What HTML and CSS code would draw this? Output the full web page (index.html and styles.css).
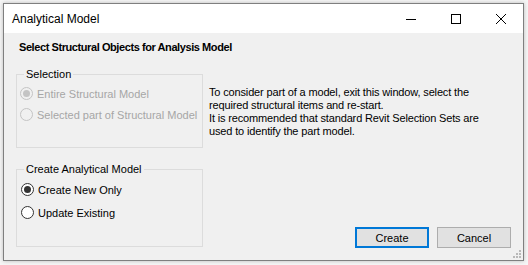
FILE: index.html
```html
<!DOCTYPE html>
<html>
<head>
<meta charset="utf-8">
<title>Analytical Model</title>
<link rel="stylesheet" href="styles.css">
</head>
<body>
<div class="window">
  <div class="titlebar">
    <span class="title">Analytical Model</span>
    <div class="controls">
      <span class="ctl"><svg width="10" height="10" viewBox="0 0 10 10"><path d="M0 5.5H10" stroke="#000" stroke-width="1"/></svg></span>
      <span class="ctl"><svg width="10" height="10" viewBox="0 0 10 10"><rect x="0.5" y="0.5" width="9" height="9" fill="none" stroke="#000" stroke-width="1"/></svg></span>
      <span class="ctl"><svg width="10" height="10" viewBox="0 0 10 10"><path d="M0 0L10 10M10 0L0 10" stroke="#000" stroke-width="1"/></svg></span>
    </div>
  </div>
  <div class="client">
    <div class="heading">Select Structural Objects for Analysis Model</div>
    <div class="main">
      <div class="left">
        <fieldset class="group g1">
          <legend>Selection</legend>
          <div class="radios">
            <label class="radio disabled"><span class="dot checked"></span>Entire Structural Model</label>
            <label class="radio disabled"><span class="dot"></span>Selected part of Structural Model</label>
          </div>
        </fieldset>
        <fieldset class="group g2">
          <legend>Create Analytical Model</legend>
          <div class="radios wide">
            <label class="radio"><span class="dot checked"></span>Create New Only</label>
            <label class="radio"><span class="dot"></span>Update Existing</label>
          </div>
        </fieldset>
      </div>
      <div class="right">
        <p class="info">To consider part of a model, exit this window, select the<br>required structural items and re-start.<br>It is recommended that standard Revit Selection Sets are<br>used to identify the part model.</p>
        <div class="buttons">
          <button class="btn default">Create</button>
          <button class="btn">Cancel</button>
        </div>
      </div>
    </div>
    <svg class="grip" width="9" height="9" viewBox="0 0 9 9">
      <rect x="6" y="0" width="2" height="2" fill="#b8b8b8"/>
      <rect x="3" y="3" width="2" height="2" fill="#b8b8b8"/>
      <rect x="6" y="3" width="2" height="2" fill="#b8b8b8"/>
      <rect x="0" y="6" width="2" height="2" fill="#b8b8b8"/>
      <rect x="3" y="6" width="2" height="2" fill="#b8b8b8"/>
      <rect x="6" y="6" width="2" height="2" fill="#b8b8b8"/>
    </svg>
  </div>
</div>
</body>
</html>
```
FILE: styles.css
```css
html, body {
  margin: 0;
  padding: 0;
}
body {
  background: #f6f6f6;
  font-family: "Liberation Sans", Arial, sans-serif;
  font-size: 11px;
  color: #000;
  padding: 3px 0 0 3px;
  width: 528px;
  height: 265px;
  box-sizing: border-box;
  overflow: hidden;
}
.window {
  width: 521px;
  height: 258px;
  box-sizing: border-box;
  border: 1px solid #7f7f7f;
  box-shadow: 0 0 4px rgba(0,0,0,0.25);
  display: flex;
  flex-direction: column;
  background: #f0f0f0;
}
.titlebar {
  height: 29px;
  flex: none;
  background: #fff;
  display: flex;
  align-items: center;
}
.title {
  font-size: 12px;
  padding-left: 8px;
  flex: 1;
}
.controls {
  display: flex;
  height: 100%;
}
.ctl {
  width: 45px;
  display: flex;
  align-items: center;
  justify-content: center;
}
.ctl svg { display: block; }
.client {
  flex: 1;
  position: relative;
  padding: 8px 12px 0 12px;
  display: flex;
  flex-direction: column;
}
.heading {
  font-weight: bold;
  font-size: 11px;
  line-height: 13px;
  padding-left: 3px;
  letter-spacing: -0.42px;
}
.main {
  display: flex;
  margin-top: 14px;
  flex: 1;
}
.left {
  display: flex;
  flex-direction: column;
  gap: 15px;
  width: 187px;
}
.group {
  margin: 0;
  padding: 0 3px;
  border: 1px solid #dcdcdc;
  box-sizing: border-box;
  min-width: 0;
}
.g1 { height: 80px; }
.g2 { height: 84px; }
.group legend {
  padding: 0 2px;
  margin-left: 4px;
  line-height: 13px;
  font-size: 11px;
}
.radios {
  display: flex;
  flex-direction: column;
  gap: 4px;
  padding-top: 4px;
}
.radios.wide {
  gap: 6px;
  padding-top: 5px;
  padding-left: 1px;
}
.radio {
  display: flex;
  align-items: center;
  height: 17px;
  gap: 4px;
  white-space: nowrap;
}
.dot {
  flex: none;
  width: 13px;
  height: 13px;
  box-sizing: border-box;
  border: 1px solid #333;
  border-radius: 50%;
  background: #fff;
  display: flex;
  align-items: center;
  justify-content: center;
}
.dot.checked::after {
  content: "";
  width: 7px;
  height: 7px;
  border-radius: 50%;
  background: #333;
}
.radio.disabled { color: #a6a6a6; }
.radio.disabled .dot {
  border-color: #c4c4c4;
  background: #f0f0f0;
}
.radio.disabled .dot.checked::after { background: #c4c4c4; }
.right {
  flex: 1;
  display: flex;
  flex-direction: column;
  padding-left: 6px;
}
.info {
  margin: 18px 0 0 0;
  line-height: 13px;
  letter-spacing: -0.15px;
}
.buttons {
  margin-top: auto;
  margin-bottom: 12px;
  display: flex;
  justify-content: flex-end;
  gap: 8px;
}
.btn {
  width: 74px;
  height: 21px;
  box-sizing: border-box;
  background: #e1e1e1;
  border: 1px solid #adadad;
  font-family: "Liberation Sans", Arial, sans-serif;
  font-size: 11px;
  color: #000;
  padding: 0;
}
.btn.default {
  border: 2px solid #0078d7;
}
.grip {
  position: absolute;
  right: 1px;
  bottom: 1px;
}
```
